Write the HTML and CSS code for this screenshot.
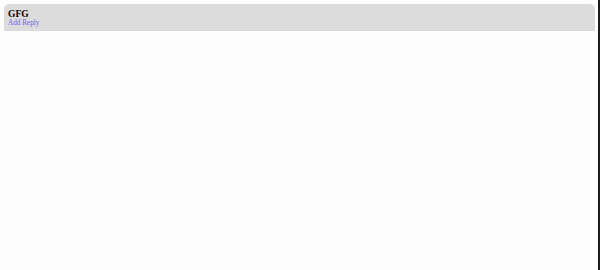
FILE: index.html
```html
<!DOCTYPE html>
<html>
<head>
<meta charset="utf-8">
<link rel="stylesheet" href="styles.css">
</head>
<body>
<div class="comment">
  <div class="author">GFG</div>
  <a class="reply" href="#">Add Reply</a>
</div>
</body>
</html>
```
FILE: styles.css
```css
html {
  height: 100%;
  box-sizing: border-box;
  border-right: 2px solid #1c1c1c;
  background: #fdfdfd;
}
body {
  margin: 4px 3px 4px 4px;
  font-family: "Liberation Serif", "Times New Roman", serif;
}
.comment {
  background: #dcdcdc;
  border-radius: 6px;
  box-shadow: 0 2px 5px rgba(0, 0, 0, 0.28);
  padding: 5px 4px 3px;
  display: flex;
  flex-direction: column;
  align-items: flex-start;
}
.author {
  font-weight: bold;
  font-size: 9.5px;
  line-height: 10px;
  color: #000;
}
.reply {
  font-size: 7.2px;
  line-height: 9px;
  color: #6e60ea;
  text-decoration: none;
}
```
